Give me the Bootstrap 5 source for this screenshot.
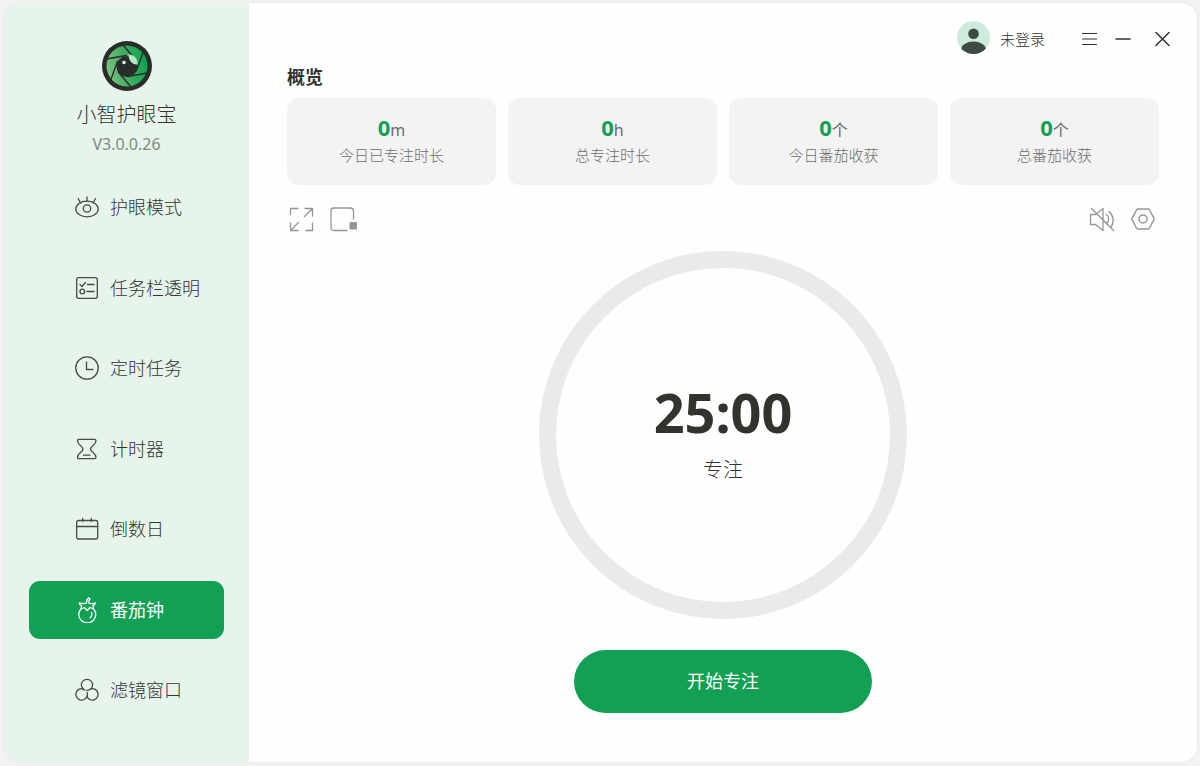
<!DOCTYPE html>
<html lang="zh-CN">
<head>
<meta charset="utf-8">
<meta name="viewport" content="width=device-width, initial-scale=1">
<title>小智护眼宝</title>
<link href="https://cdn.jsdelivr.net/npm/bootstrap@5.3.0/dist/css/bootstrap.min.css" rel="stylesheet">
<style>
:root{--brand:#12a054;--ink:#30342d;--side:#e6f4eb}
body{background:#f3f3f3;color:var(--ink);font-family:"Noto Sans","Noto Sans CJK SC",sans-serif;font-size:15px;line-height:24px;padding:3px 3px 4px 4px}
svg{display:block;fill:none;stroke:currentColor;stroke-linecap:round;stroke-linejoin:round;flex:none}
svg.solid{stroke:none}
.app-window{min-height:calc(100vh - 7px);border-radius:16px;background:#fefefe;box-shadow:0 0 4px rgba(0,0,0,.06)}
.sidebar{width:245px;background:var(--side);padding:38px 25px 43px 25px}
.app-name{font-size:20px;line-height:28px;margin-top:10px;font-weight:300}
.version{font-size:16px;line-height:24px;color:#7f8a83;margin-top:3px;margin-bottom:22px}
.side-link{height:58px;border-radius:11px;padding-left:46px;gap:11px;font-size:18px;font-weight:300;color:#30362f;text-decoration:none}
.side-link svg{color:#454b45}
.side-link.active,.side-link.active svg{color:#fff}
.side-link.active{background:var(--brand);font-weight:400}
.main-pane{padding:18px 38px 49px}
.top-bar{height:36px;margin-right:-11px}
.plain{border:0;background:none;padding:0;color:inherit}
.account{gap:10px;margin-right:36px;font-weight:300}
.account svg{margin-bottom:3px}
.overview-title{font-size:18px;line-height:24px;font-weight:700;margin:8px 0 9px}
.stats{--bs-gutter-x:12px}
.stat{height:87px;padding-top:15px;background:#f3f3f3;border-radius:12px;color:#6d6d6d}
.stat-value{font-size:16px;line-height:28px}
.stat-value strong{font-size:22px;color:var(--brand)}
.stat-label{font-weight:300;line-height:22px}
.tools{margin:20px 4px 18px 2px;color:#959595}
.ring{width:368px;height:368px;border:17px solid #eaeaea;border-radius:50%}
.time{font-size:54px;line-height:60px;font-weight:700}
.phase{font-size:20px;line-height:32px;margin-top:12px;margin-bottom:2px;font-weight:300}
.start{width:298px;height:63px;background:var(--brand);color:#fff;font-size:18px;margin-top:31px}
.start:hover{background:#0e8d49;color:#fff}
</style>
</head>
<body>
<div class="app-window d-flex overflow-hidden">
  <aside class="sidebar d-flex flex-column flex-shrink-0">
    <div class="text-center">
      <svg class="solid mx-auto" width="50" height="50" viewBox="0 0 50 50" aria-hidden="true">
        <defs><linearGradient id="iris" x1="0" x2="1" y1=".6" y2=".4"><stop offset="0" stop-color="#7cc080"/><stop offset=".5" stop-color="#3fac62"/><stop offset="1" stop-color="#0ba350"/></linearGradient></defs>
        <circle cx="25" cy="25" r="25" fill="#292d29"/>
        <circle cx="25" cy="25" r="20.500" fill="url(#iris)"/>
        <g stroke="#292d29" stroke-width="1.400">
          <path d="M6 14.500h20" transform="rotate(-10 25 25)"/><path d="M6 14.500h20" transform="rotate(50 25 25)"/><path d="M6 14.500h20" transform="rotate(110 25 25)"/><path d="M6 14.500h20" transform="rotate(170 25 25)"/><path d="M6 14.500h20" transform="rotate(230 25 25)"/><path d="M6 14.500h20" transform="rotate(290 25 25)"/>
        </g>
        <circle cx="25" cy="25.500" r="10.500" fill="#292d29"/>
        <path d="M26.500 13.500c5.500 0 9.500 4 9 10-5.500.5-9-4.500-9-10Z" fill="#b4e8c5"/>
        <circle cx="22" cy="21.500" r="1.800" fill="#e2f8e9"/>
      </svg>
      <h1 class="app-name mb-0">小智护眼宝</h1>
      <div class="version">V3.0.0.26</div>
    </div>
    <nav class="d-flex flex-column justify-content-between flex-grow-1">
      <a href="#" class="side-link d-flex align-items-center"><svg width="24" height="24" viewBox="0 0 24 24" stroke-width="1.300"><ellipse cx="12" cy="14" rx="11.200" ry="7.800"/><circle cx="12" cy="13.500" r="3.700"/><path d="M12 2v4M3.200 3.500l2.300 4.500M20.500 3.500 18 8"/></svg>护眼模式</a>
      <a href="#" class="side-link d-flex align-items-center"><svg width="24" height="24" viewBox="0 0 24 24" stroke-width="1.300"><rect x="1.700" y="1.700" width="20.600" height="20.600" rx="2"/><path d="m5 8.500 2 2 3.500-4M12.500 8.500H19M12 15.500h7"/><circle cx="7.300" cy="15.500" r="2.300"/></svg>任务栏透明</a>
      <a href="#" class="side-link d-flex align-items-center"><svg width="24" height="24" viewBox="0 0 24 24" stroke-width="1.300"><circle cx="12" cy="12" r="11.200"/><path d="M11.500 6v7.500H18"/></svg>定时任务</a>
      <a href="#" class="side-link d-flex align-items-center"><svg width="24" height="24" viewBox="0 0 24 24" stroke-width="1.300"><path d="M4 2.300h15.500q1.500 0 1.500 1.500c0 4.500-5.500 5-5.500 8.200s5.500 4 5.500 8.200q0 1.500-1.500 1.500H4q-1.500 0-1.500-1.500C2.500 16 8 15.200 8 12S2.500 8.300 2.500 3.800Q2.500 2.300 4 2.300Z"/><path d="M8.500 18.200h6.500"/></svg>计时器</a>
      <a href="#" class="side-link d-flex align-items-center"><svg width="24" height="24" viewBox="0 0 24 24" stroke-width="1.300"><rect x="1.700" y="3.500" width="21" height="18.500" rx="2"/><path d="M1.700 9.500h21M7.700 1.500v3M16.300 1.500v3"/></svg>倒数日</a>
      <a href="#" class="side-link active d-flex align-items-center" aria-current="page"><svg width="24" height="26" viewBox="0 0 24 26" stroke-width="1.300"><path d="M5.500 12.500A8.500 8.300 0 1 0 19 12.500"/><path d="M11.500 6C9 7 6.500 6.500 4.300 5.800c.2 1.500 1 2.500 2.200 3L6 12l3.500-1.500 2.700 3 2.800-3 3.500 1.500-.5-3.200c1.200-.5 2-1.500 2.200-3-2 .8-5 1.200-6.500.2 0-2 .3-3.200 1.300-4.300L13.500.8c-1.500 1.200-2 3-2 5.200Z"/><path d="M16.500 15.500c.8 2 .3 4-1.300 5.300"/></svg>番茄钟</a>
      <a href="#" class="side-link d-flex align-items-center"><svg width="24" height="24" viewBox="0 0 24 24" stroke-width="1.300"><path d="M8 10.800a5.600 5.600 0 1 1 8 0c-1.200 1.200-2.700 1.700-4.200 1.600"/><path d="M8 10.800A5.700 5.700 0 1 0 12 18.300c.6-1.300.6-2.600 0-4"/><path d="M16 10.800A5.700 5.700 0 1 1 12 18.300M8 10.800q.8.900 1.800 1.300"/></svg>滤镜窗口</a>
    </nav>
  </aside>

  <main class="main-pane flex-grow-1 d-flex flex-column">
    <header class="top-bar d-flex justify-content-end align-items-center">
      <button type="button" class="plain account d-flex align-items-center">
        <svg class="solid" width="33" height="33" viewBox="0 0 33 33" aria-hidden="true"><defs><clipPath id="face"><circle cx="16.500" cy="16.500" r="16.500"/></clipPath></defs><circle cx="16.500" cy="16.500" r="16.500" fill="#cdebdb"/><g clip-path="url(#face)" fill="#3d4a43"><circle cx="16.500" cy="12.700" r="5.300"/><ellipse cx="16.500" cy="29" rx="12.500" ry="8.500"/></g></svg>
        <span>未登录</span>
      </button>
      <button type="button" class="plain" aria-label="菜单"><svg width="17" height="16" viewBox="0 0 17 16" stroke-width="1.200"><path d="M1.500 2.500h14M1.500 8h14M1.500 13.500h14"/></svg></button>
      <button type="button" class="plain ms-3" aria-label="最小化"><svg width="17" height="16" viewBox="0 0 17 16" stroke-width="1.500"><path d="M2 8h14"/></svg></button>
      <button type="button" class="plain ms-4" aria-label="关闭"><svg width="15" height="16" viewBox="0 0 15 16" stroke-width="1.500"><path d="m1 1.500 13 13M14 1.500l-13 13"/></svg></button>
    </header>
    <h2 class="overview-title">概览</h2>
    <div class="row row-cols-4 stats">
      <div class="col"><div class="stat text-center"><div class="stat-value"><strong>0</strong>m</div><div class="stat-label">今日已专注时长</div></div></div>
      <div class="col"><div class="stat text-center"><div class="stat-value"><strong>0</strong>h</div><div class="stat-label">总专注时长</div></div></div>
      <div class="col"><div class="stat text-center"><div class="stat-value"><strong>0</strong>个</div><div class="stat-label">今日番茄收获</div></div></div>
      <div class="col"><div class="stat text-center"><div class="stat-value"><strong>0</strong>个</div><div class="stat-label">总番茄收获</div></div></div>
    </div>
    <div class="tools d-flex">
      <button type="button" class="plain" aria-label="全屏"><svg width="25" height="28" viewBox="0 0 25 28" stroke-width="1.300"><path d="M1.500 9.500V3.500h7.500M16 3.500h7.500v7.500M23.500 3.500 15.500 11.500M1.500 18v7.500H9M1.500 25.500l8-8M23.500 18v7.500H17"/></svg></button>
      <button type="button" class="plain ms-3" aria-label="小窗"><svg width="28" height="28" viewBox="0 0 28 28" stroke-width="1.300"><path d="M17 25.500H4A3 3 0 0 1 1 22.500V6a3 3 0 0 1 3-3h16.500a3 3 0 0 1 3 3v8"/><rect x="19.500" y="17" width="7.500" height="7.500" rx="1" fill="currentColor" stroke="none"/></svg></button>
      <button type="button" class="plain ms-auto" aria-label="静音"><svg width="27" height="28" viewBox="0 0 27 28" stroke-width="1.300"><path d="M2.500 9.500H7.500l7.500-6v22l-7.500-6h-5ZM3.500 3.500l22 22M18.500 9.500c3 2.500 3 6.500 0 9M21 6.500c5 4.500 5.300 11 2 15.500"/></svg></button>
      <button type="button" class="plain ms-3" aria-label="设置"><svg width="24" height="28" viewBox="0 0 24 28" stroke-width="1.500"><path d="M7 4h10q1 0 1.500 1l4.300 8q.5 1 0 2l-4.300 8q-.5 1-1.500 1H7q-1 0-1.500-1l-4.300-8q-.5-1 0-2l4.300-8Q6 4 7 4Z"/><circle cx="12" cy="14" r="4"/></svg></button>
    </div>
    <section class="d-flex flex-column align-items-center">
      <div class="ring d-flex flex-column align-items-center justify-content-center">
        <div class="time">25:00</div>
        <div class="phase">专注</div>
      </div>
      <button type="button" class="btn rounded-pill border-0 start">开始专注</button>
    </section>
  </main>
</div>
<script src="https://cdn.jsdelivr.net/npm/bootstrap@5.3.0/dist/js/bootstrap.bundle.min.js"></script>
</body>
</html>
